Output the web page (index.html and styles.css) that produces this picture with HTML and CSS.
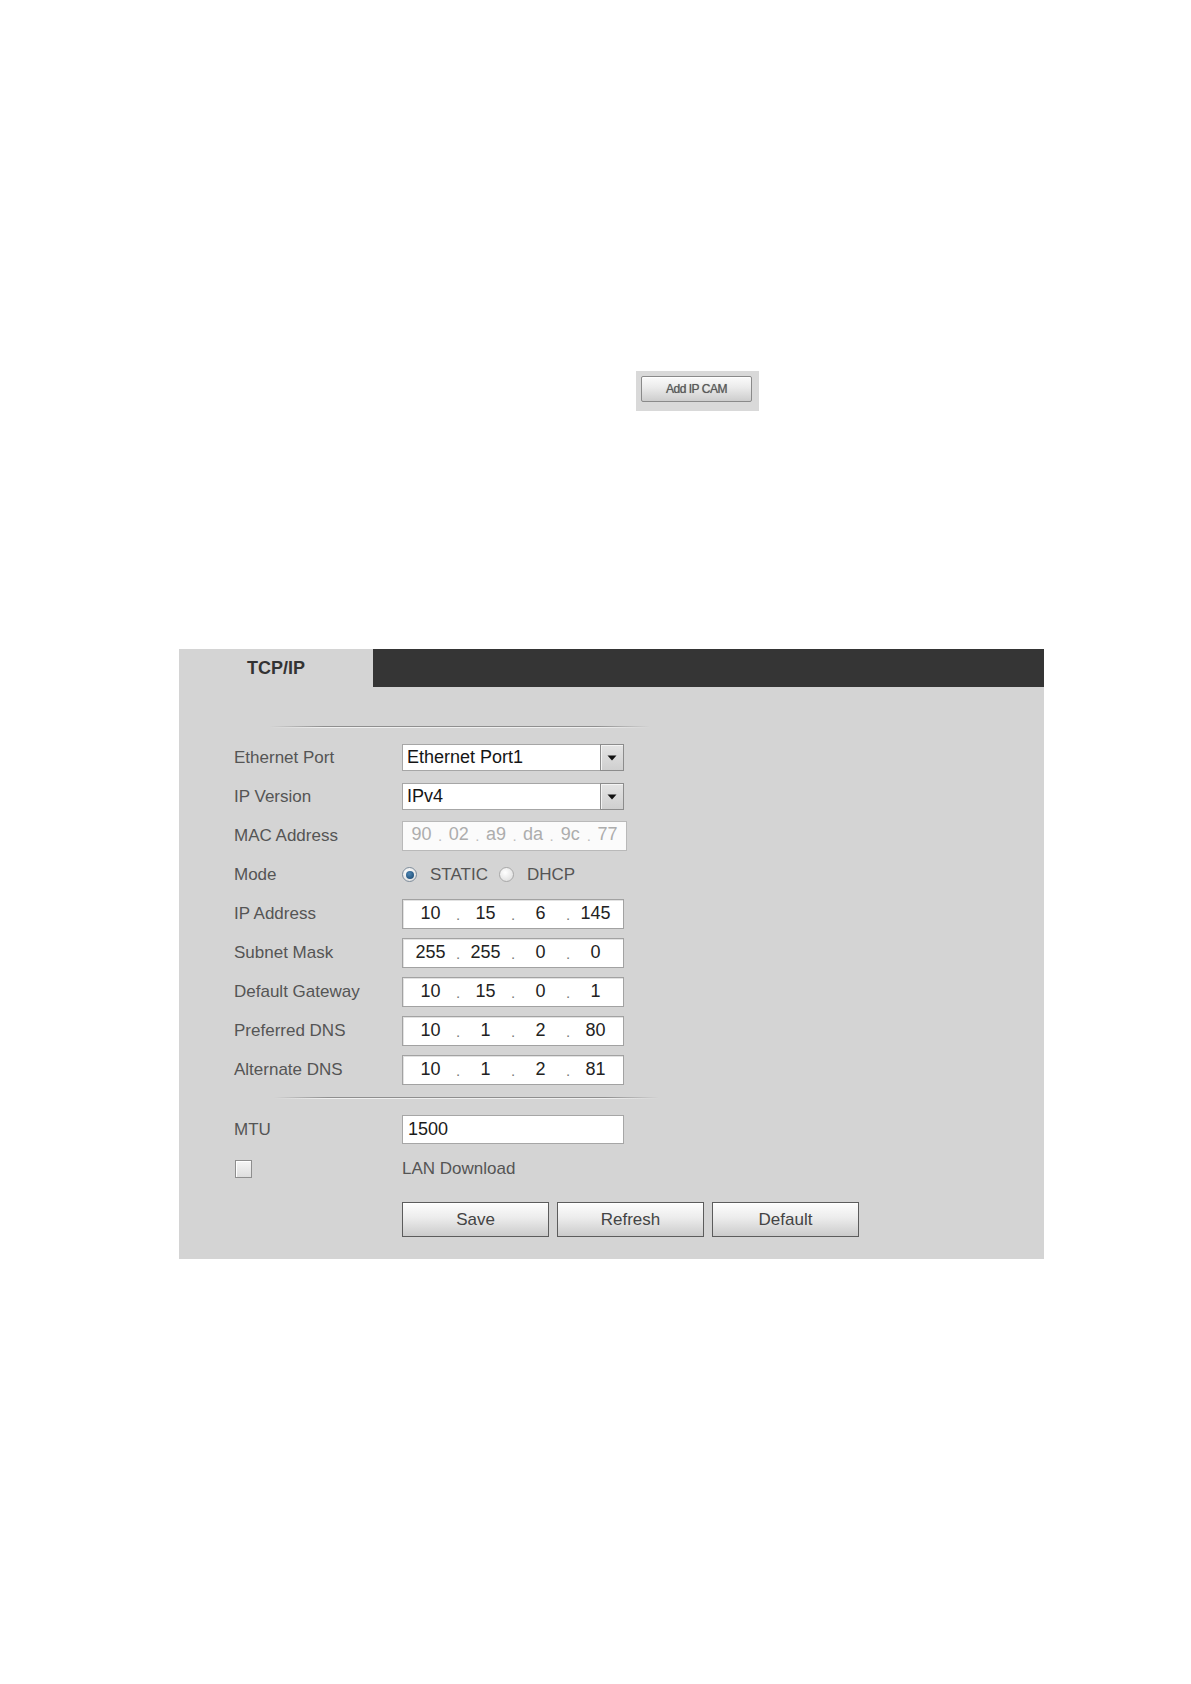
FILE: index.html
```html
<!DOCTYPE html>
<html lang="en">
<head>
<meta charset="utf-8">
<title>TCP/IP</title>
<link rel="stylesheet" href="styles.css">
</head>
<body>
<div class="page">
  <div class="cam-strip">
    <div class="cam-wrap"><button class="cam-btn" type="button">Add IP CAM</button></div>
  </div>

  <section class="panel">
    <div class="tabs">
      <div class="tab">TCP/IP</div>
      <div class="tabbar"></div>
    </div>
    <div class="panel-body">
      <div class="sep sep1"></div>
      <div class="rows">
        <div class="row">
          <span class="label">Ethernet Port</span>
          <div class="select"><span class="sel-text">Ethernet Port1</span><span class="sel-btn"><svg width="10" height="6" viewBox="0 0 10 6"><path d="M0.5 0.5 L9.5 0.5 L5 5.5 Z" fill="#111"/></svg></span></div>
        </div>
        <div class="row">
          <span class="label">IP Version</span>
          <div class="select"><span class="sel-text">IPv4</span><span class="sel-btn"><svg width="10" height="6" viewBox="0 0 10 6"><path d="M0.5 0.5 L9.5 0.5 L5 5.5 Z" fill="#111"/></svg></span></div>
        </div>
        <div class="row">
          <span class="label">MAC Address</span>
          <div class="mac">
            <span class="oct">90</span><span class="dot">.</span><span class="oct">02</span><span class="dot">.</span><span class="oct">a9</span><span class="dot">.</span><span class="oct">da</span><span class="dot">.</span><span class="oct">9c</span><span class="dot">.</span><span class="oct">77</span>
          </div>
        </div>
        <div class="row">
          <span class="label">Mode</span>
          <div class="mode">
            <span class="radio on"></span><span class="mode-text">STATIC</span>
            <span class="radio"></span><span class="mode-text">DHCP</span>
          </div>
        </div>
        <div class="row">
          <span class="label">IP Address</span>
          <div class="ip"><span class="oct">10</span><span class="dot">.</span><span class="oct">15</span><span class="dot">.</span><span class="oct">6</span><span class="dot">.</span><span class="oct">145</span></div>
        </div>
        <div class="row">
          <span class="label">Subnet Mask</span>
          <div class="ip"><span class="oct">255</span><span class="dot">.</span><span class="oct">255</span><span class="dot">.</span><span class="oct">0</span><span class="dot">.</span><span class="oct">0</span></div>
        </div>
        <div class="row">
          <span class="label">Default Gateway</span>
          <div class="ip"><span class="oct">10</span><span class="dot">.</span><span class="oct">15</span><span class="dot">.</span><span class="oct">0</span><span class="dot">.</span><span class="oct">1</span></div>
        </div>
        <div class="row">
          <span class="label">Preferred DNS</span>
          <div class="ip"><span class="oct">10</span><span class="dot">.</span><span class="oct">1</span><span class="dot">.</span><span class="oct">2</span><span class="dot">.</span><span class="oct">80</span></div>
        </div>
        <div class="row">
          <span class="label">Alternate DNS</span>
          <div class="ip"><span class="oct">10</span><span class="dot">.</span><span class="oct">1</span><span class="dot">.</span><span class="oct">2</span><span class="dot">.</span><span class="oct">81</span></div>
        </div>
      </div>
      <div class="sep sep2"></div>
      <div class="row">
        <span class="label">MTU</span>
        <div class="text-field">1500</div>
      </div>
      <div class="row">
        <span class="label"><span class="checkbox"></span></span>
        <span class="plain">LAN Download</span>
      </div>
      <div class="actions">
        <button class="btn" type="button">Save</button>
        <button class="btn" type="button">Refresh</button>
        <button class="btn" type="button">Default</button>
      </div>
    </div>
  </section>
</div>
</body>
</html>
```

FILE: styles.css
```css
* { box-sizing: border-box; }

body {
  margin: 0;
  background: #ffffff;
  font-family: "Liberation Sans", Arial, sans-serif;
}

.page {
  padding-top: 371px;
  padding-bottom: 40px;
}

/* Add IP CAM */
.cam-strip {
  padding-left: 636px;
}

.cam-wrap {
  width: 123px;
  height: 40px;
  background: #d9d9d9;
  padding: 5px 7px 9px 5px;
}

.cam-btn {
  display: block;
  width: 111px;
  height: 26px;
  margin: 0;
  padding: 0;
  border: 1px solid #8a8a8a;
  border-radius: 2px;
  background: linear-gradient(#fbfbfb, #eaeaea 45%, #cdcdcd);
  box-shadow: inset 0 1px 0 #ffffff;
  font-family: "Liberation Sans", Arial, sans-serif;
  font-size: 12px;
  letter-spacing: -0.5px;
  color: #5a5a5a;
  text-shadow: 0 0 0.7px #777;
}

/* Panel */
.panel {
  margin: 238px 0 0 179px;
  width: 865px;
  background: #d4d4d4;
}

.tabs {
  display: flex;
  height: 38px;
}

.tab {
  width: 194px;
  padding-left: 68px;
  line-height: 38px;
  font-size: 18px;
  font-weight: bold;
  color: #333333;
}

.tabbar {
  flex: 1;
  background: #353535;
}

.panel-body {
  padding: 0 0 22px 55px;
}

.sep {
  height: 2px;
  background:
    linear-gradient(90deg, #d4d4d4, rgba(212,212,212,0) 14%, rgba(212,212,212,0) 86%, #d4d4d4),
    linear-gradient(#8f8f8f 0 1px, #f0f0f0 1px 2px);
}

.sep1 {
  margin: 39px 0 10px 36px;
  width: 380px;
}

.sep2 {
  margin: 8px 0 11px 40px;
  width: 385px;
}

.row {
  display: flex;
  align-items: center;
  height: 39px;
}

.label {
  width: 168px;
  flex: none;
  font-size: 17px;
  color: #555555;
  display: flex;
  align-items: center;
}

/* select */
.select {
  width: 222px;
  height: 27px;
  display: flex;
  background: #ffffff;
  border: 1px solid #a6a6a6;
}

.sel-text {
  flex: 1;
  padding-left: 4px;
  font-size: 18px;
  line-height: 25px;
  color: #151515;
}

.sel-btn {
  width: 24px;
  display: flex;
  align-items: center;
  justify-content: center;
  background: linear-gradient(#e4e4e4, #cfcfcf);
  border: 1px solid #8c8c8c;
  box-shadow: inset 1px 1px 0 #f4f4f4;
  margin: -1px -1px -1px 0;
}

/* MAC */
.mac {
  width: 225px;
  height: 30px;
  display: flex;
  background: #fbfbfb;
  border: 1px solid #b9b9b9;
  font-size: 18px;
  line-height: 25px;
  color: #adadad;
}

/* IP */
.ip {
  width: 222px;
  height: 30px;
  display: flex;
  background: #ffffff;
  border: 1px solid #a2a2a2;
  box-shadow: inset 1px 1px 0 #e2e2e2;
  font-size: 18px;
  line-height: 26px;
  color: #222222;
}

.oct {
  flex: 1;
  text-align: center;
}

.dot {
  width: 0;
  display: flex;
  justify-content: center;
  padding-top: 2px;
  color: #777777;
  font-size: 15px;
}

.mac .dot {
  color: #bdbdbd;
  padding-top: 1px;
}

/* Mode radios */
.mode {
  display: flex;
  align-items: center;
  font-size: 17px;
  color: #555555;
}

.radio {
  width: 15px;
  height: 15px;
  border-radius: 50%;
  border: 1px solid #a8a8a8;
  background: radial-gradient(circle at 40% 35%, #ffffff, #d8d8d8);
  display: flex;
  align-items: center;
  justify-content: center;
}

.radio.on {
  border-color: #7d8c9b;
}

.radio.on::after {
  content: "";
  width: 8px;
  height: 8px;
  border-radius: 50%;
  background: radial-gradient(circle at 40% 35%, #4f86b3, #14436c);
}

.mode-text {
  margin: 0 11px 0 13px;
}

/* MTU */
.text-field {
  width: 222px;
  height: 29px;
  background: #ffffff;
  border: 1px solid #a6a6a6;
  padding-left: 5px;
  font-size: 18px;
  line-height: 26px;
  color: #1a1a1a;
}

.checkbox {
  width: 17px;
  height: 18px;
  margin-left: 1px;
  border: 1px solid #8e8e8e;
  background: linear-gradient(#f6f6f6, #dedede);
  box-shadow: inset 1px 1px 0 #ffffff;
}

.plain {
  font-size: 17px;
  color: #555555;
}

/* Buttons */
.actions {
  display: flex;
  gap: 8px;
  margin: 14px 0 0 168px;
}

.btn {
  width: 147px;
  height: 35px;
  margin: 0;
  padding: 0;
  border: 1px solid #5c5c5c;
  background: linear-gradient(#fdfdfd, #ececec 45%, #cbcbcb);
  box-shadow: inset 0 1px 0 #ffffff;
  font-family: "Liberation Sans", Arial, sans-serif;
  font-size: 17px;
  color: #444444;
}
```
